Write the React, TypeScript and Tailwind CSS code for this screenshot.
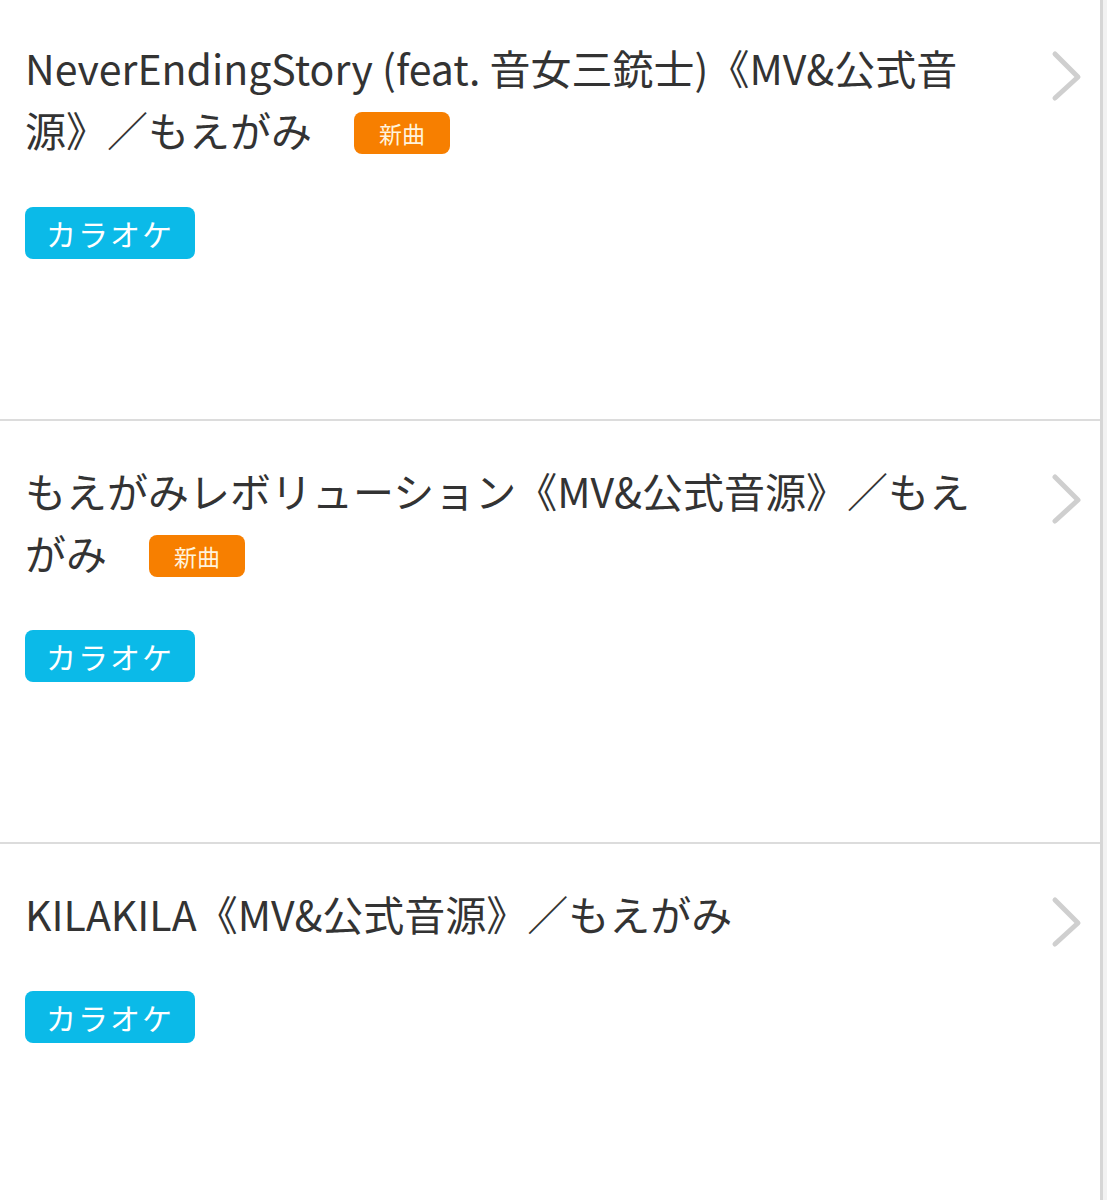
import React from "react";

type Song = { title: string; isNew: boolean };

const songs: Song[] = [
  { title: "NeverEndingStory (feat. 音女三銃士)《MV&公式音源》／もえがみ", isNew: true },
  { title: "もえがみレボリューション《MV&公式音源》／もえがみ", isNew: true },
  { title: "KILAKILA《MV&公式音源》／もえがみ", isNew: false },
];

const Chevron = () => (
  <svg width="34" height="52" viewBox="0 0 34 52" className="shrink-0">
    <path d="M5 4 L28 27 L5 48" fill="none" stroke="#cfcfcf" strokeWidth="5" strokeLinecap="round" strokeLinejoin="round" />
  </svg>
);

const SongRow = ({ song }: { song: Song }) => (
  <div className="h-[423px] border-b-2 border-[#dcdcdc] flex items-start pl-[25px] pr-[16px] pt-[38px]">
    <div className="flex-1 min-w-0">
      <p className="text-[41px] leading-[62px] text-[#333333] pr-[45px]">
        {song.title}
        {song.isNew && (
          <span className="inline-block align-middle ml-[42px] -mt-[6px] w-[96px] h-[42px] rounded-[8px] bg-[#f77f00] text-[#fff3dc] text-[23px] leading-[42px] text-center">
            新曲
          </span>
        )}
      </p>
      <div className="mt-[47px] inline-block w-[170px] h-[52px] rounded-[8px] bg-[#0bbae8] text-white text-[30px] leading-[52px] text-center tracking-[2px]">
        カラオケ
      </div>
    </div>
    <div className="pt-[14px]">
      <Chevron />
    </div>
  </div>
);

export default function App() {
  return (
    <div
      className="w-[1107px] h-[1200px] bg-white overflow-hidden flex"
      style={{ fontFamily: '"Noto Sans CJK JP", "Noto Sans", sans-serif' }}
    >
      <div className="w-[1100px] -mt-[2px]">
        {songs.map((s) => (
          <SongRow key={s.title} song={s} />
        ))}
      </div>
      <div className="w-[3px] bg-[#d6d6d6]" />
      <div className="w-[4px] bg-[#f2f2f2]" />
    </div>
  );
}
